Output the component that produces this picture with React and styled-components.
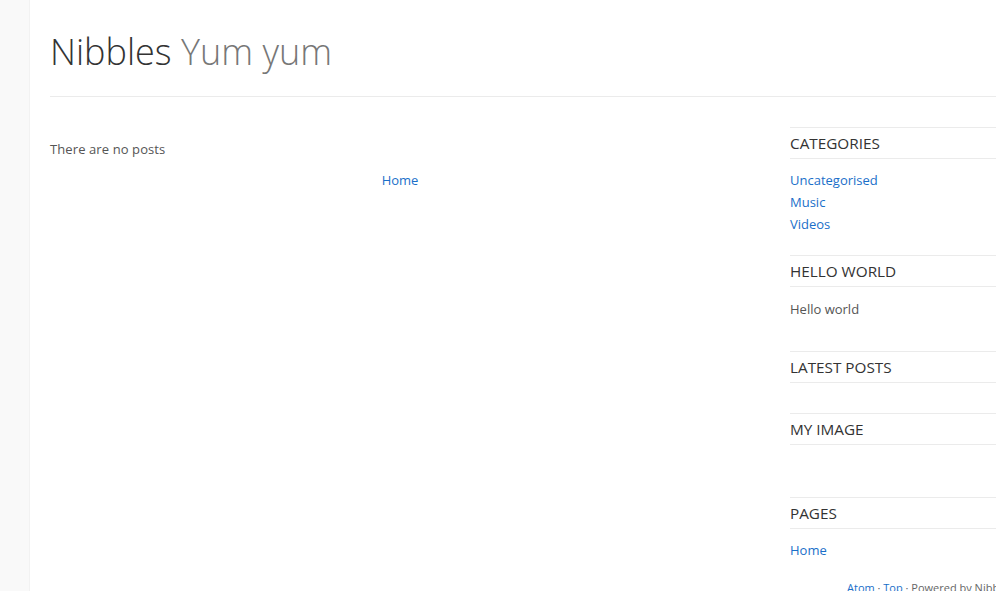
import React from "react";
import styled, { createGlobalStyle } from "styled-components";

const Global = createGlobalStyle`
  html, body {
    margin: 0;
    padding: 0;
    overflow: hidden;
    background: #fff;
    font-family: "Open Sans", "Noto Sans", sans-serif;
  }
`;

const Page = styled.div`
  display: flex;
  min-height: 591px;
  width: 1100px;
`;

const Strip = styled.div`
  width: 29px;
  flex: none;
  background: #f9f9f9;
  border-right: 1px solid #f2f2f2;
`;

const Wrap = styled.div`
  flex: 1;
  padding: 0 20px;
`;

const Header = styled.header`
  border-bottom: 1px solid #ebebeb;
  height: 96px;
  width: 1010px;
`;

const Title = styled.h1`
  margin: 0;
  padding-top: 27px;
  font-size: 36px;
  font-weight: 300;
  line-height: 50px;
  color: #333;
  span {
    color: #777;
  }
`;

const Body = styled.div`
  display: flex;
  gap: 40px;
  padding-top: 30px;
`;

const Main = styled.main`
  width: 700px;
  flex: none;
  font-size: 13px;
  line-height: 22px;
  color: #555;
`;

const Empty = styled.p`
  margin: 11px 0 0;
  letter-spacing: 0.1px;
`;

const Pager = styled.div`
  text-align: center;
  margin-top: 9px;
`;

const A = styled.a`
  color: #1a6fc9;
  text-decoration: none;
  font-size: ${(p) => p.$size || 13}px;
`;

const Side = styled.aside`
  width: 260px;
  flex: none;
`;

const Widget = styled.section`
  margin-bottom: ${(p) => p.$gap}px;
`;

const WTitle = styled.h2`
  margin: 0;
  border-top: 1px solid #ebebeb;
  border-bottom: 1px solid #ebebeb;
  height: 30px;
  line-height: 31px;
  font-size: 15.3px;
  font-weight: 400;
  color: #333;
  text-transform: uppercase;
`;

const List = styled.ul`
  list-style: none;
  margin: 0;
  padding: 10px 0 0;
  li {
    line-height: 22px;
    font-size: 13px;
  }
`;

const Text = styled.p`
  margin: 0;
  padding: 11px 0 0;
  font-size: 13px;
  line-height: 22px;
  color: #555;
`;

const Footer = styled.div`
  font-size: 11px;
  line-height: 17px;
  color: #666;
  padding-left: 57px;
  margin-top: 18px;
  white-space: nowrap;
`;

export default function App() {
  return (
    <>
      <Global />
      <Page>
        <Strip />
        <Wrap>
          <Header>
            <Title>
              Nibbles <span>Yum yum</span>
            </Title>
          </Header>
          <Body>
            <Main>
              <Empty>There are no posts</Empty>
              <Pager>
                <A href="#">Home</A>
              </Pager>
            </Main>
            <Side>
              <Widget $gap={20}>
                <WTitle>Categories</WTitle>
                <List>
                  <li><A href="#">Uncategorised</A></li>
                  <li><A href="#">Music</A></li>
                  <li><A href="#">Videos</A></li>
                </List>
              </Widget>
              <Widget $gap={31}>
                <WTitle>Hello World</WTitle>
                <Text>Hello world</Text>
              </Widget>
              <Widget $gap={30}>
                <WTitle>Latest Posts</WTitle>
              </Widget>
              <Widget $gap={52}>
                <WTitle>My Image</WTitle>
              </Widget>
              <Widget $gap={0}>
                <WTitle>Pages</WTitle>
                <List>
                  <li><A href="#">Home</A></li>
                </List>
              </Widget>
              <Footer>
                <A href="#" $size={11}>Atom</A> · <A href="#" $size={11}>Top</A> · Powered by Nibbles
              </Footer>
            </Side>
          </Body>
        </Wrap>
      </Page>
    </>
  );
}
